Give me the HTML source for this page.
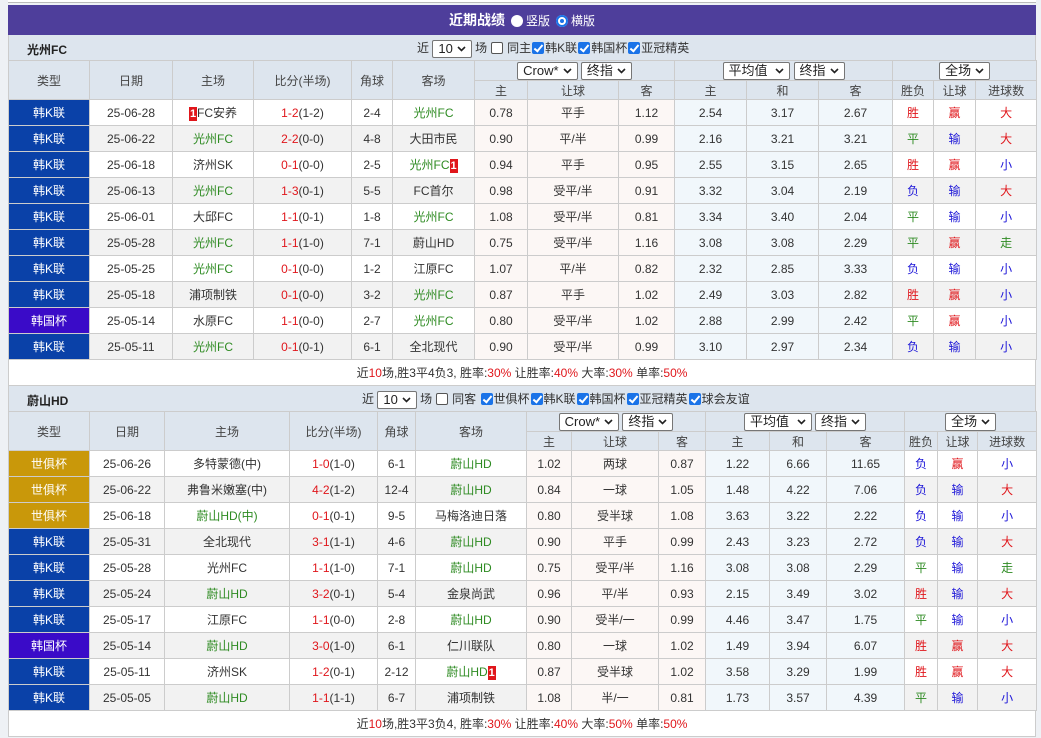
<!DOCTYPE html>
<html><head><meta charset="utf-8"><style>
*{box-sizing:border-box;margin:0;padding:0}
body{width:1041px;height:738px;background:#eef1f5;font-family:"Liberation Sans","Noto Sans CJK SC",sans-serif;font-size:12px;color:#333;overflow:hidden;position:relative}
.topline{position:absolute;left:8px;top:0;width:1028px;height:3px;border-bottom:1px solid #bbb;background:#fff}
.wrap{position:absolute;left:8px;top:5px;width:1028px;background:#fff}
.title{height:30px;background:#4e3e9b;color:#fff;text-align:center;font-size:14px;font-weight:bold;line-height:30px}
.title .r{font-size:12px;font-weight:normal;vertical-align:middle}
.rad{display:inline-block;width:12px;height:12px;border-radius:50%;background:#fff;vertical-align:-2px;margin:0 3px 0 6px}
.rad.on{background:#1a73e8;box-shadow:inset 0 0 0 2px #1a73e8,inset 0 0 0 4px #fff}
.sec{height:25px;background:#dde5ee;position:relative;border-left:1px solid #ccc;border-right:1px solid #ccc}
.sec b{position:absolute;left:18px;top:6px;font-size:12px;color:#222}
.sec .ctl{position:absolute;top:4px;font-size:12px;color:#333;white-space:nowrap}
.sel{display:inline-block;border:1px solid #767676;border-radius:2px;background:#fff;height:18px;line-height:16px;padding:0 5px;font-size:13px;color:#222;vertical-align:middle}
.sel svg{vertical-align:1px;margin-left:4px}
.cb{display:inline-block;width:12px;height:12px;border-radius:2px;vertical-align:-2px;margin:0 1px}
.cb.on{background:#1a73e8;position:relative}
.cb.on:after{content:"";position:absolute;left:4px;top:1px;width:3px;height:7px;border:solid #fff;border-width:0 2px 2px 0;transform:rotate(40deg)}
.cb.off{border:1px solid #555;background:#fff;margin:0 4px}
table{border-collapse:collapse;table-layout:fixed;width:1028px}
td,th{border:1px solid #ccc;text-align:center;font-weight:normal;white-space:nowrap;overflow:hidden;padding:0}
th{background:#dde5ee;color:#444;height:19px}
tr.h1 th{height:20px}
td{height:26px}
tr.a td{background:#fff}tr.b td{background:#f2f2f2}
tr td.o1{background:#fcf7f5}tr td.o2{background:#f1f7fb}
td.k{background:#0a41a8!important;color:#fff}
td.c{background:#3a0bc8!important;color:#fff}
td.w{background:#c9980a!important;color:#fff}
.g{color:#2e8b22}.rd{color:#e0161b}.bl{color:#1d16d8}
.n{display:inline-block;background:#e0161b;color:#fff;font-weight:bold;width:8px;line-height:14px;font-size:11px}
.sum{height:26px;text-align:center;line-height:26px;border:1px solid #ccc;border-top:0;background:#fff}
</style></head><body>
<div class="topline"></div>
<div class="wrap">
<div class="title">近期战绩<span class="r"><span class="rad"></span>竖版<span class="rad on"></span>横版</span></div>

<div class="sec"><b>光州FC</b><span class="ctl" style="left:408px">近 <span class="sel">10<svg width="9" height="6"><path d="M1 1l3.5 3.5L8 1" stroke="#222" stroke-width="1.6" fill="none"/></svg></span> 场<span class="cb off"></span>同主<span class="cb on"></span>韩K联<span class="cb on"></span>韩国杯<span class="cb on"></span>亚冠精英</span></div>
<table>
<colgroup><col width="81"><col width="83"><col width="81"><col width="98"><col width="41"><col width="82"><col width="53"><col width="91"><col width="56"><col width="72"><col width="72"><col width="74"><col width="41"><col width="42"><col width="61"></colgroup>
<tr class="h1"><th rowspan="2">类型</th><th rowspan="2">日期</th><th rowspan="2">主场</th><th rowspan="2">比分(半场)</th><th rowspan="2">角球</th><th rowspan="2">客场</th><th colspan="3"><span class="sel">Crow*<svg width="9" height="6"><path d="M1 1l3.5 3.5L8 1" stroke="#222" stroke-width="1.6" fill="none"/></svg></span> <span class="sel">终指<svg width="9" height="6"><path d="M1 1l3.5 3.5L8 1" stroke="#222" stroke-width="1.6" fill="none"/></svg></span></th><th colspan="3"><span class="sel">平均值 <svg width="9" height="6"><path d="M1 1l3.5 3.5L8 1" stroke="#222" stroke-width="1.6" fill="none"/></svg></span> <span class="sel">终指<svg width="9" height="6"><path d="M1 1l3.5 3.5L8 1" stroke="#222" stroke-width="1.6" fill="none"/></svg></span></th><th colspan="3"><span class="sel">全场<svg width="9" height="6"><path d="M1 1l3.5 3.5L8 1" stroke="#222" stroke-width="1.6" fill="none"/></svg></span></th></tr>
<tr><th>主</th><th>让球</th><th>客</th><th>主</th><th>和</th><th>客</th><th>胜负</th><th>让球</th><th>进球数</th></tr>
<tr class="a"><td class="k">韩K联</td><td>25-06-28</td><td><span class="n">1</span>FC安养</td><td><span class="rd">1-2</span>(1-2)</td><td>2-4</td><td class="g">光州FC</td><td class="o1">0.78</td><td class="o1">平手</td><td class="o1">1.12</td><td class="o2">2.54</td><td class="o2">3.17</td><td class="o2">2.67</td><td class="rd">胜</td><td class="rd">赢</td><td class="rd">大</td></tr>
<tr class="b"><td class="k">韩K联</td><td>25-06-22</td><td class="g">光州FC</td><td><span class="rd">2-2</span>(0-0)</td><td>4-8</td><td>大田市民</td><td class="o1">0.90</td><td class="o1">平/半</td><td class="o1">0.99</td><td class="o2">2.16</td><td class="o2">3.21</td><td class="o2">3.21</td><td class="g">平</td><td class="bl">输</td><td class="rd">大</td></tr>
<tr class="a"><td class="k">韩K联</td><td>25-06-18</td><td>济州SK</td><td><span class="rd">0-1</span>(0-0)</td><td>2-5</td><td><span class="g">光州FC</span><span class="n">1</span></td><td class="o1">0.94</td><td class="o1">平手</td><td class="o1">0.95</td><td class="o2">2.55</td><td class="o2">3.15</td><td class="o2">2.65</td><td class="rd">胜</td><td class="rd">赢</td><td class="bl">小</td></tr>
<tr class="b"><td class="k">韩K联</td><td>25-06-13</td><td class="g">光州FC</td><td><span class="rd">1-3</span>(0-1)</td><td>5-5</td><td>FC首尔</td><td class="o1">0.98</td><td class="o1">受平/半</td><td class="o1">0.91</td><td class="o2">3.32</td><td class="o2">3.04</td><td class="o2">2.19</td><td class="bl">负</td><td class="bl">输</td><td class="rd">大</td></tr>
<tr class="a"><td class="k">韩K联</td><td>25-06-01</td><td>大邱FC</td><td><span class="rd">1-1</span>(0-1)</td><td>1-8</td><td class="g">光州FC</td><td class="o1">1.08</td><td class="o1">受平/半</td><td class="o1">0.81</td><td class="o2">3.34</td><td class="o2">3.40</td><td class="o2">2.04</td><td class="g">平</td><td class="bl">输</td><td class="bl">小</td></tr>
<tr class="b"><td class="k">韩K联</td><td>25-05-28</td><td class="g">光州FC</td><td><span class="rd">1-1</span>(1-0)</td><td>7-1</td><td>蔚山HD</td><td class="o1">0.75</td><td class="o1">受平/半</td><td class="o1">1.16</td><td class="o2">3.08</td><td class="o2">3.08</td><td class="o2">2.29</td><td class="g">平</td><td class="rd">赢</td><td class="g">走</td></tr>
<tr class="a"><td class="k">韩K联</td><td>25-05-25</td><td class="g">光州FC</td><td><span class="rd">0-1</span>(0-0)</td><td>1-2</td><td>江原FC</td><td class="o1">1.07</td><td class="o1">平/半</td><td class="o1">0.82</td><td class="o2">2.32</td><td class="o2">2.85</td><td class="o2">3.33</td><td class="bl">负</td><td class="bl">输</td><td class="bl">小</td></tr>
<tr class="b"><td class="k">韩K联</td><td>25-05-18</td><td>浦项制铁</td><td><span class="rd">0-1</span>(0-0)</td><td>3-2</td><td class="g">光州FC</td><td class="o1">0.87</td><td class="o1">平手</td><td class="o1">1.02</td><td class="o2">2.49</td><td class="o2">3.03</td><td class="o2">2.82</td><td class="rd">胜</td><td class="rd">赢</td><td class="bl">小</td></tr>
<tr class="a"><td class="c">韩国杯</td><td>25-05-14</td><td>水原FC</td><td><span class="rd">1-1</span>(0-0)</td><td>2-7</td><td class="g">光州FC</td><td class="o1">0.80</td><td class="o1">受平/半</td><td class="o1">1.02</td><td class="o2">2.88</td><td class="o2">2.99</td><td class="o2">2.42</td><td class="g">平</td><td class="rd">赢</td><td class="bl">小</td></tr>
<tr class="b"><td class="k">韩K联</td><td>25-05-11</td><td class="g">光州FC</td><td><span class="rd">0-1</span>(0-1)</td><td>6-1</td><td>全北现代</td><td class="o1">0.90</td><td class="o1">受平/半</td><td class="o1">0.99</td><td class="o2">3.10</td><td class="o2">2.97</td><td class="o2">2.34</td><td class="bl">负</td><td class="bl">输</td><td class="bl">小</td></tr>
</table>
<div class="sum">近<span class="rd">10</span>场,胜3平4负3, 胜率:<span class="rd">30%</span> 让胜率:<span class="rd">40%</span> 大率:<span class="rd">30%</span> 单率:<span class="rd">50%</span></div>

<div class="sec"><b>蔚山HD</b><span class="ctl" style="left:353px">近 <span class="sel">10<svg width="9" height="6"><path d="M1 1l3.5 3.5L8 1" stroke="#222" stroke-width="1.6" fill="none"/></svg></span> 场<span class="cb off"></span>同客 <span class="cb on"></span>世俱杯<span class="cb on"></span>韩K联<span class="cb on"></span>韩国杯<span class="cb on"></span>亚冠精英<span class="cb on"></span>球会友谊</span></div>
<table>
<colgroup><col width="81"><col width="75"><col width="125"><col width="88"><col width="38"><col width="111"><col width="45"><col width="87"><col width="47"><col width="64"><col width="57"><col width="78"><col width="33"><col width="40"><col width="59"></colgroup>
<tr class="h1"><th rowspan="2">类型</th><th rowspan="2">日期</th><th rowspan="2">主场</th><th rowspan="2">比分(半场)</th><th rowspan="2">角球</th><th rowspan="2">客场</th><th colspan="3"><span class="sel">Crow*<svg width="9" height="6"><path d="M1 1l3.5 3.5L8 1" stroke="#222" stroke-width="1.6" fill="none"/></svg></span> <span class="sel">终指<svg width="9" height="6"><path d="M1 1l3.5 3.5L8 1" stroke="#222" stroke-width="1.6" fill="none"/></svg></span></th><th colspan="3"><span class="sel">平均值 <svg width="9" height="6"><path d="M1 1l3.5 3.5L8 1" stroke="#222" stroke-width="1.6" fill="none"/></svg></span> <span class="sel">终指<svg width="9" height="6"><path d="M1 1l3.5 3.5L8 1" stroke="#222" stroke-width="1.6" fill="none"/></svg></span></th><th colspan="3"><span class="sel">全场<svg width="9" height="6"><path d="M1 1l3.5 3.5L8 1" stroke="#222" stroke-width="1.6" fill="none"/></svg></span></th></tr>
<tr><th>主</th><th>让球</th><th>客</th><th>主</th><th>和</th><th>客</th><th>胜负</th><th>让球</th><th>进球数</th></tr>
<tr class="a"><td class="w">世俱杯</td><td>25-06-26</td><td>多特蒙德(中)</td><td><span class="rd">1-0</span>(1-0)</td><td>6-1</td><td class="g">蔚山HD</td><td class="o1">1.02</td><td class="o1">两球</td><td class="o1">0.87</td><td class="o2">1.22</td><td class="o2">6.66</td><td class="o2">11.65</td><td class="bl">负</td><td class="rd">赢</td><td class="bl">小</td></tr>
<tr class="b"><td class="w">世俱杯</td><td>25-06-22</td><td>弗鲁米嫩塞(中)</td><td><span class="rd">4-2</span>(1-2)</td><td>12-4</td><td class="g">蔚山HD</td><td class="o1">0.84</td><td class="o1">一球</td><td class="o1">1.05</td><td class="o2">1.48</td><td class="o2">4.22</td><td class="o2">7.06</td><td class="bl">负</td><td class="bl">输</td><td class="rd">大</td></tr>
<tr class="a"><td class="w">世俱杯</td><td>25-06-18</td><td class="g">蔚山HD(中)</td><td><span class="rd">0-1</span>(0-1)</td><td>9-5</td><td>马梅洛迪日落</td><td class="o1">0.80</td><td class="o1">受半球</td><td class="o1">1.08</td><td class="o2">3.63</td><td class="o2">3.22</td><td class="o2">2.22</td><td class="bl">负</td><td class="bl">输</td><td class="bl">小</td></tr>
<tr class="b"><td class="k">韩K联</td><td>25-05-31</td><td>全北现代</td><td><span class="rd">3-1</span>(1-1)</td><td>4-6</td><td class="g">蔚山HD</td><td class="o1">0.90</td><td class="o1">平手</td><td class="o1">0.99</td><td class="o2">2.43</td><td class="o2">3.23</td><td class="o2">2.72</td><td class="bl">负</td><td class="bl">输</td><td class="rd">大</td></tr>
<tr class="a"><td class="k">韩K联</td><td>25-05-28</td><td>光州FC</td><td><span class="rd">1-1</span>(1-0)</td><td>7-1</td><td class="g">蔚山HD</td><td class="o1">0.75</td><td class="o1">受平/半</td><td class="o1">1.16</td><td class="o2">3.08</td><td class="o2">3.08</td><td class="o2">2.29</td><td class="g">平</td><td class="bl">输</td><td class="g">走</td></tr>
<tr class="b"><td class="k">韩K联</td><td>25-05-24</td><td class="g">蔚山HD</td><td><span class="rd">3-2</span>(0-1)</td><td>5-4</td><td>金泉尚武</td><td class="o1">0.96</td><td class="o1">平/半</td><td class="o1">0.93</td><td class="o2">2.15</td><td class="o2">3.49</td><td class="o2">3.02</td><td class="rd">胜</td><td class="bl">输</td><td class="rd">大</td></tr>
<tr class="a"><td class="k">韩K联</td><td>25-05-17</td><td>江原FC</td><td><span class="rd">1-1</span>(0-0)</td><td>2-8</td><td class="g">蔚山HD</td><td class="o1">0.90</td><td class="o1">受半/一</td><td class="o1">0.99</td><td class="o2">4.46</td><td class="o2">3.47</td><td class="o2">1.75</td><td class="g">平</td><td class="bl">输</td><td class="bl">小</td></tr>
<tr class="b"><td class="c">韩国杯</td><td>25-05-14</td><td class="g">蔚山HD</td><td><span class="rd">3-0</span>(1-0)</td><td>6-1</td><td>仁川联队</td><td class="o1">0.80</td><td class="o1">一球</td><td class="o1">1.02</td><td class="o2">1.49</td><td class="o2">3.94</td><td class="o2">6.07</td><td class="rd">胜</td><td class="rd">赢</td><td class="rd">大</td></tr>
<tr class="a"><td class="k">韩K联</td><td>25-05-11</td><td>济州SK</td><td><span class="rd">1-2</span>(0-1)</td><td>2-12</td><td><span class="g">蔚山HD</span><span class="n">1</span></td><td class="o1">0.87</td><td class="o1">受半球</td><td class="o1">1.02</td><td class="o2">3.58</td><td class="o2">3.29</td><td class="o2">1.99</td><td class="rd">胜</td><td class="rd">赢</td><td class="rd">大</td></tr>
<tr class="b"><td class="k">韩K联</td><td>25-05-05</td><td class="g">蔚山HD</td><td><span class="rd">1-1</span>(1-1)</td><td>6-7</td><td>浦项制铁</td><td class="o1">1.08</td><td class="o1">半/一</td><td class="o1">0.81</td><td class="o2">1.73</td><td class="o2">3.57</td><td class="o2">4.39</td><td class="g">平</td><td class="bl">输</td><td class="bl">小</td></tr>
</table>
<div class="sum">近<span class="rd">10</span>场,胜3平3负4, 胜率:<span class="rd">30%</span> 让胜率:<span class="rd">40%</span> 大率:<span class="rd">50%</span> 单率:<span class="rd">50%</span></div>
</div>
</body></html>
